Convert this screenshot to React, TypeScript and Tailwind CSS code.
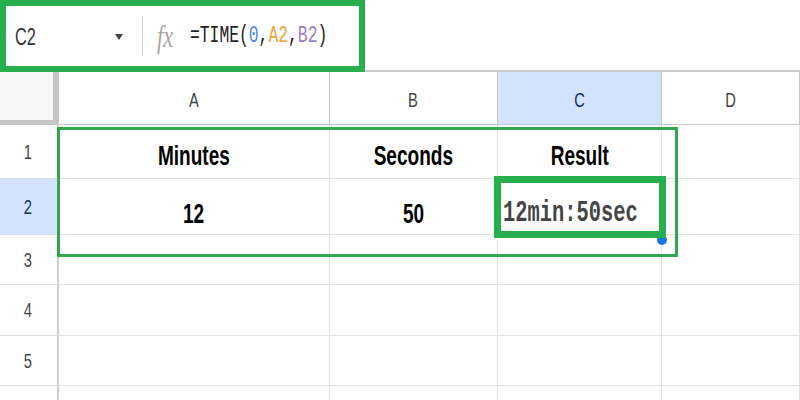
import React from 'react';

const rowHeights = ['h-[54px]', 'h-[56px]', 'h-[50px]', 'h-[51px]', 'h-[50px]', 'h-[50px]'];

const HeaderCell = ({ label, active }: { label: string; active?: boolean }) => (
    <div className={`flex items-center justify-center border-r border-b border-[#c7c7c7] pt-[3px] ${active ? 'bg-[#d3e3fd]' : 'bg-white'}`}>
        <span className={`inline-block scale-x-[0.7] text-[21px] ${active ? 'text-[#0b2f5e]' : 'text-[#444]'}`}>{label}</span>
    </div>
);

const RowLabel = ({ n, active }: { n: number; active?: boolean }) => (
    <div className={`flex items-center justify-center border-r-2 border-b border-r-[#cfcfcf] border-b-[#dcdcdc] pr-[2px] ${active ? 'bg-[#d3e3fd]' : 'bg-white'}`}>
        <span className={`inline-block scale-x-[0.7] text-[21px] ${active ? 'text-[#0b2f5e]' : 'text-[#444]'}`}>{n}</span>
    </div>
);

const Cell = ({ children, className = '' }: { children?: React.ReactNode; className?: string }) => (
    <div className={`flex border-r border-b border-[#e2e2e2] ${className}`}>{children}</div>
);

const Bold = ({ children }: { children: React.ReactNode }) => (
    <span className="inline-block scale-x-[0.68] text-[28px] leading-[28px] font-bold text-black">{children}</span>
);

export default function App() {
    return (
        <div className="relative h-[400px] w-[800px] overflow-hidden bg-white font-['Liberation_Sans',Arial,sans-serif]">
            {/* name box + formula bar */}
            <div className="flex h-[72px]">
                <div className="flex h-[72px] w-[365px] shrink-0 items-center overflow-hidden border-[6px] border-[#27ae4f] bg-white">
                    <div className="flex w-[136px] shrink-0 items-center justify-between pl-[9px] pr-[19px] pt-[1px]">
                        <span className="inline-block origin-left scale-x-[0.68] text-[24px] text-[#333]">C2</span>
                        <svg width="8" height="6" viewBox="0 0 8 6"><path d="M0 0h8L4 6z" fill="#444" /></svg>
                    </div>
                    <div className="h-[40px] w-px shrink-0 bg-[#d9d9d9]" />
                    <span className="ml-[14px] inline-block w-[22px] shrink-0 origin-left scale-x-[0.72] font-['Liberation_Serif',serif] text-[31px] leading-[31px] italic text-[#a6a6a6]">fx</span>
                    <span className="ml-[11px] inline-block shrink-0 origin-left scale-x-[0.71] whitespace-nowrap font-['Liberation_Mono',monospace] text-[23px] text-[#222]">
                        =TIME(<span className="text-[#4e86ea]">0</span>,<span className="text-[#f2a53a]">A2</span>,<span className="text-[#9a80c6]">B2</span>)
                    </span>
                </div>
                <div className="flex-1 border-b-2 border-[#c8c8c8]" />
            </div>

            {/* grid */}
            <div className="grid grid-cols-[59px_271px_168px_164px_138px]">
                <div className="h-[53px] border-r-[6px] border-b-[5px] border-[#c6c6c6] bg-[#f6f6f6]" />
                <HeaderCell label="A" />
                <HeaderCell label="B" />
                <HeaderCell label="C" active />
                <HeaderCell label="D" />

                {rowHeights.map((h, i) => (
                    <React.Fragment key={i}>
                        <div className={h + ' grid'}>
                            <RowLabel n={i + 1} active={i === 1} />
                        </div>
                        {i === 0 && (
                            <>
                                <Cell className="items-end justify-center pb-[8px]"><Bold>Minutes</Bold></Cell>
                                <Cell className="items-end justify-center pb-[8px]"><Bold>Seconds</Bold></Cell>
                                <Cell className="items-end justify-center pb-[8px]"><Bold>Result</Bold></Cell>
                                <Cell />
                            </>
                        )}
                        {i === 1 && (
                            <>
                                <Cell className="items-end justify-center pb-[6px]"><Bold>12</Bold></Cell>
                                <Cell className="items-end justify-center pb-[6px]"><Bold>50</Bold></Cell>
                                <Cell className="items-end pb-[6px] pl-[5px]">
                                    <span className="inline-block origin-left scale-x-[0.68] whitespace-nowrap font-['Liberation_Mono',monospace] text-[30px] leading-[30px] font-bold text-[#444]">12min:50sec</span>
                                </Cell>
                                <Cell />
                            </>
                        )}
                        {i > 1 && (
                            <>
                                <Cell />
                                <Cell />
                                <Cell />
                                <Cell />
                            </>
                        )}
                    </React.Fragment>
                ))}
            </div>

            {/* highlights */}
            <div className="absolute left-[57px] top-[127px] h-[130px] w-[621px] border-[3px] border-[#2fa84f]" />
            <div className="absolute left-[657px] top-[235px] h-[10px] w-[10px] rounded-full bg-[#1a73e8]" />
            <div className="absolute left-[494px] top-[176px] h-[62px] w-[172px] border-[7px] border-[#27ae4f]" />
        </div>
    );
}
